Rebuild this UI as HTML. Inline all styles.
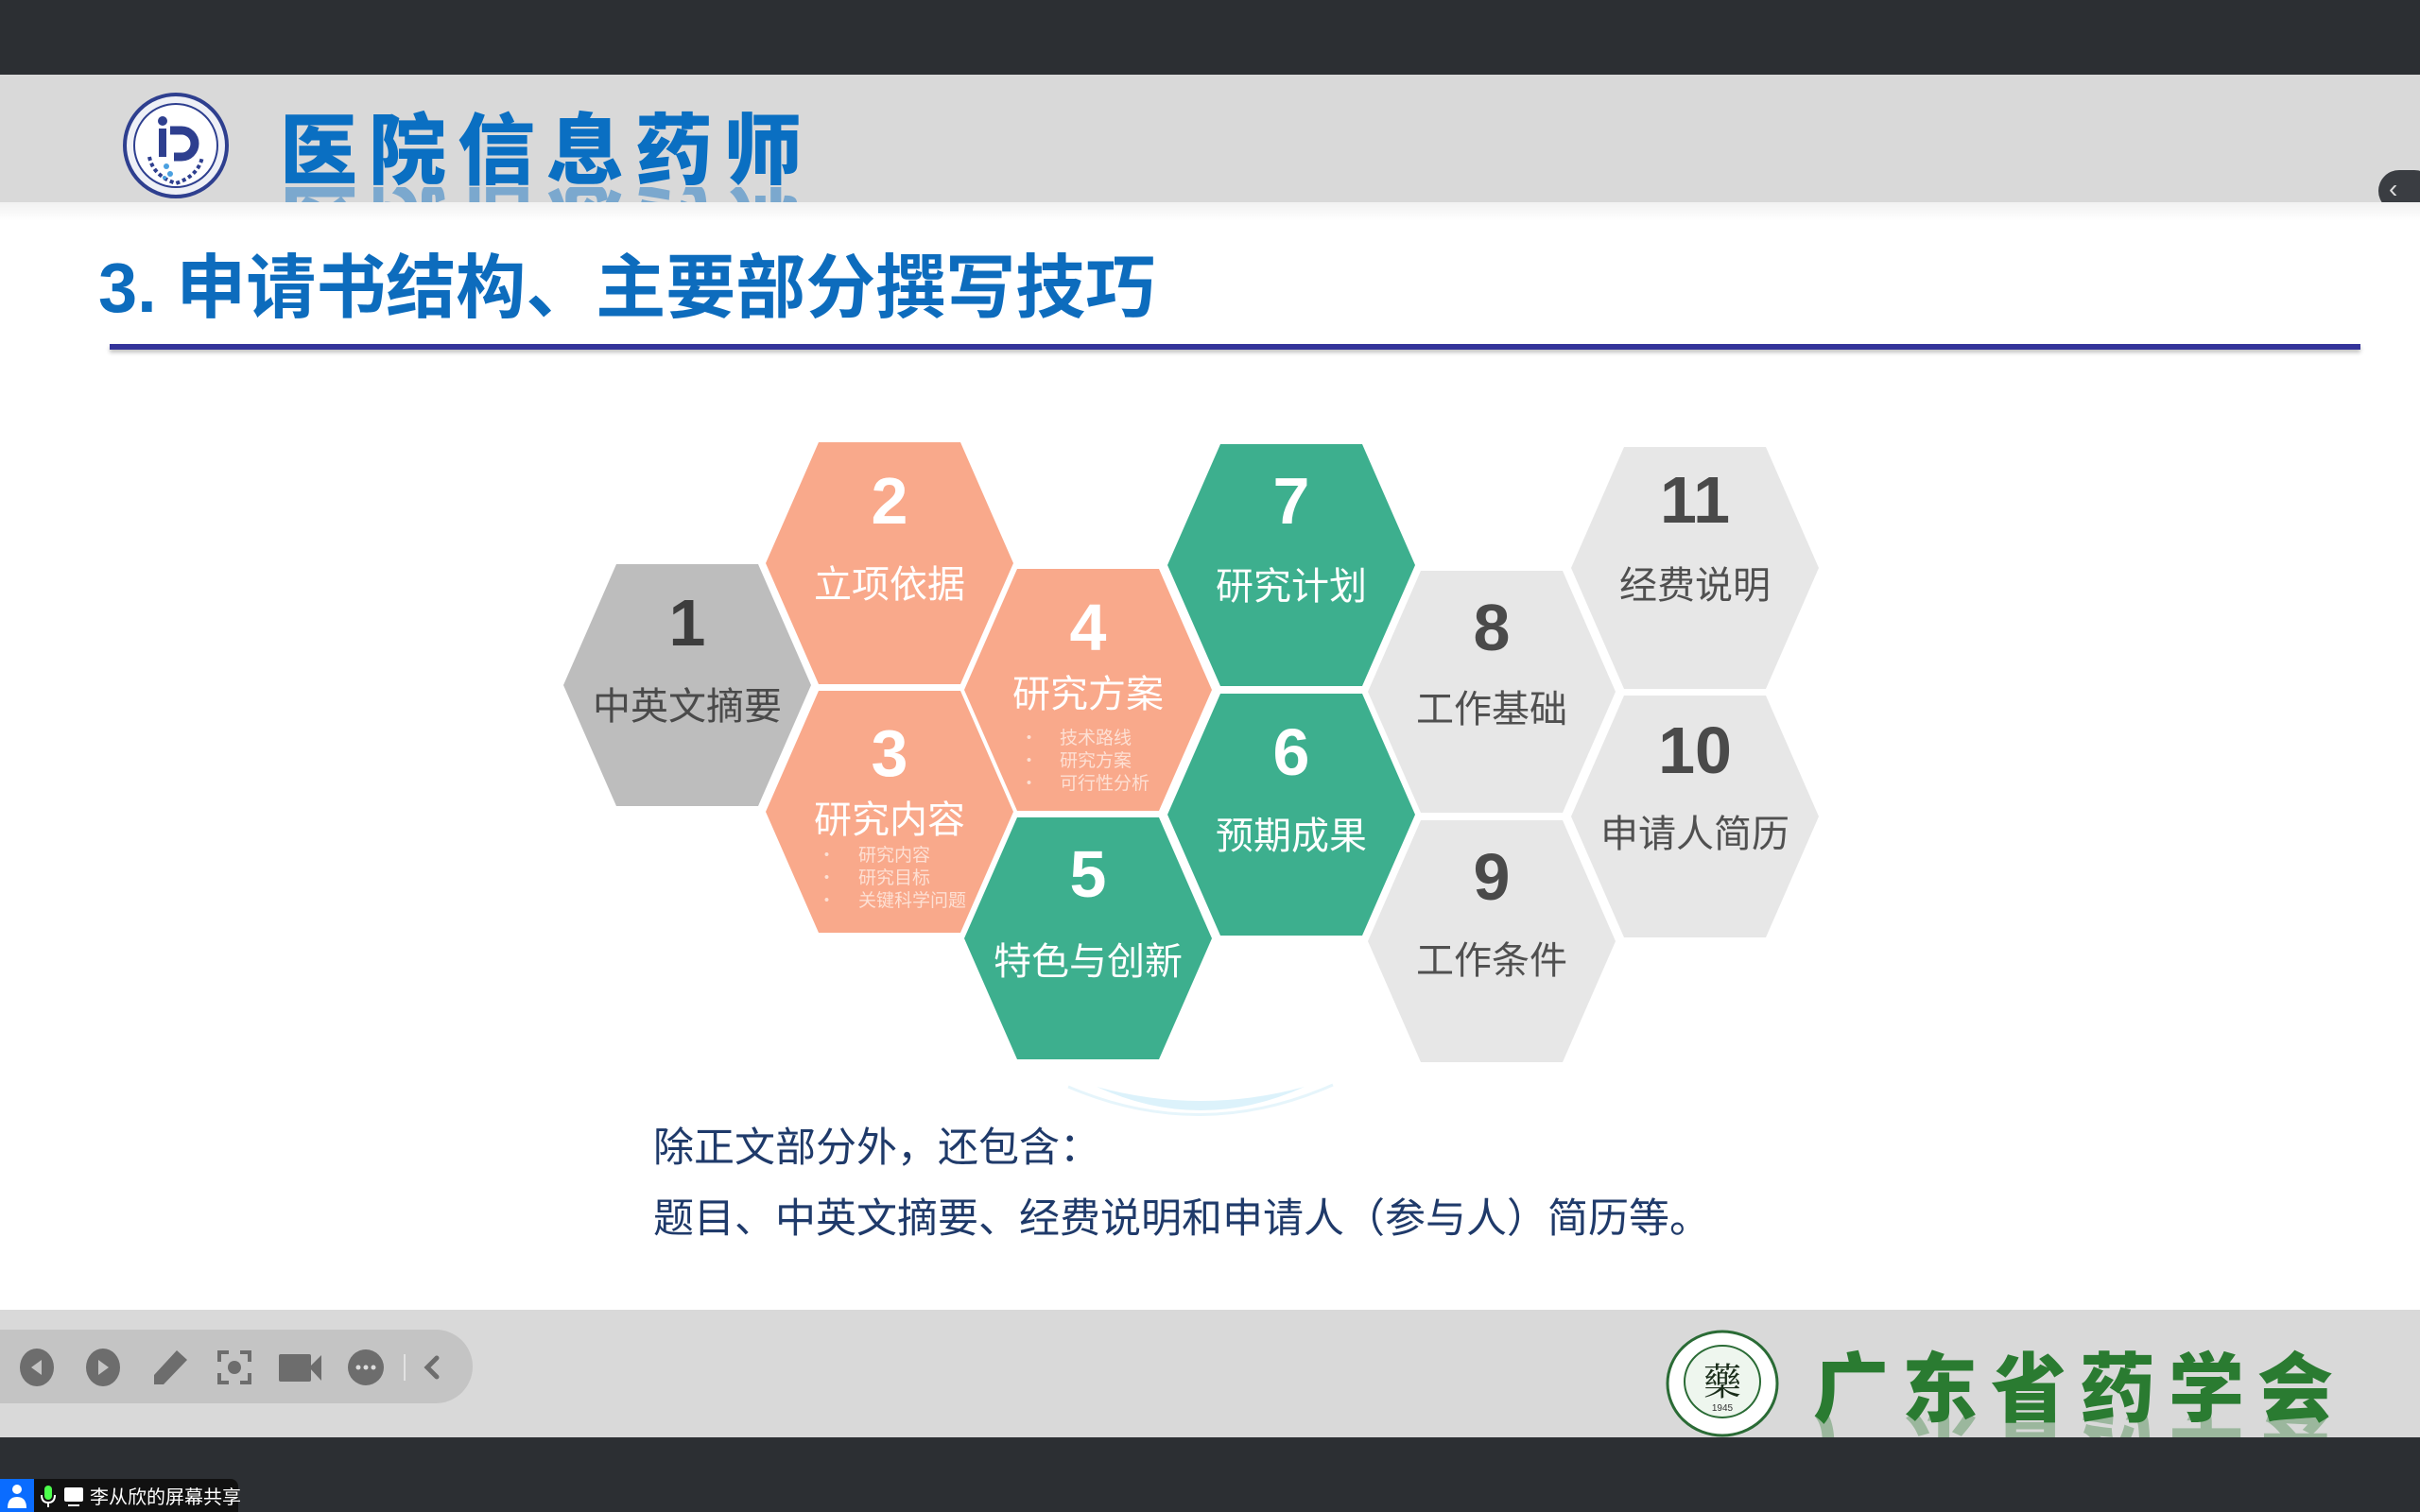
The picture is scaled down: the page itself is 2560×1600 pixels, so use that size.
<!DOCTYPE html>
<html><head><meta charset="utf-8">
<style>
html,body{margin:0;padding:0}
body{width:2560px;height:1600px;position:relative;overflow:hidden;background:#fff;font-family:"Liberation Sans","Noto Sans CJK SC",sans-serif}
.abs{position:absolute}
.cjk{font-family:"Noto Sans CJK SC","WenQuanYi Zen Hei",sans-serif}
</style></head>
<body>
<div class="abs" style="left:0;top:0;width:2560px;height:79px;background:#2c2f33"></div>
<div class="abs" style="left:0;top:79px;width:2560px;height:135px;background:#d9d9d9"></div>
<div class="abs" style="left:2516px;top:180px;width:60px;height:44px;background:#3a3d42;border-radius:22px"></div>
<div class="abs" style="left:2527px;top:184px;color:#ddd;font-size:28px">‹</div>

<svg class="abs" style="left:128px;top:96px" width="116" height="116" viewBox="0 0 116 116">
<circle cx="58" cy="58" r="54" fill="#eef0f6" stroke="#2e3f8f" stroke-width="4"/>
<circle cx="58" cy="58" r="44" fill="#fff" stroke="#2e3f8f" stroke-width="2"/>
<path d="M30 70 Q34 90 58 98 Q82 90 86 70" fill="none" stroke="#2e3f8f" stroke-width="4" stroke-dasharray="4 3"/>
<rect x="40" y="40" width="8" height="30" fill="#2e3f8f"/>
<circle cx="44" cy="32" r="5" fill="#2e3f8f"/>
<path d="M52 42 h12 a14 14 0 0 1 0 28 h-8" fill="none" stroke="#2e3f8f" stroke-width="9"/>
<circle cx="48" cy="80" r="3" fill="#4aa0e0"/><circle cx="52" cy="88" r="3" fill="#4aa0e0"/><circle cx="46" cy="92" r="2" fill="#4aa0e0"/>
</svg>
<div class="abs cjk" style="left:296px;top:103px;font-size:82px;font-weight:900;color:#0a6fc2;letter-spacing:12px;line-height:100px">医院信息药师</div>
<div class="abs" style="left:296px;top:198px;width:600px;height:18px;overflow:hidden;opacity:.45">
<div class="cjk" style="position:absolute;left:0;top:-10px;font-size:82px;font-weight:900;color:#0a6fc2;letter-spacing:12px;line-height:100px;transform:scaleY(-1);white-space:nowrap">医院信息药师</div>
</div>
<div class="abs" style="left:0;top:214px;width:2560px;height:20px;background:linear-gradient(#f1f1f1,#fff)"></div>

<div class="abs" style="left:104px;top:260px;font-size:74px;font-weight:bold;color:#0d6cbd;line-height:90px;font-family:'Liberation Sans','Noto Sans CJK SC',sans-serif;white-space:nowrap">3. 申请书结构、主要部分撰写技巧</div>
<div class="abs" style="left:116px;top:364px;width:2381px;height:6px;background:#33339a;box-shadow:0 3px 4px rgba(0,0,0,.25)"></div>

<svg class="abs" style="left:1120px;top:1140px" width="300" height="60"><path d="M40 10 Q150 60 260 10 Q150 40 40 10Z" fill="#dcf2fb"/><path d="M10 10 Q150 70 290 8" fill="none" stroke="#e6f5fb" stroke-width="3"/></svg>

<svg class="abs" style="left:0;top:0" width="2560" height="1400" viewBox="0 0 2560 1400">
<defs><polygon id="h" points="-131,0 -75,-128 75,-128 131,0 75,128 -75,128"/></defs>
<g font-family="Noto Sans CJK SC,sans-serif" text-anchor="middle">
<g transform="translate(727,725)"><use href="#h" fill="#bdbdbd"/>
<text y="-42" font-family="Liberation Sans" font-weight="bold" font-size="70" fill="#3d3d3d">1</text>
<text y="36" font-size="40" fill="#4a4a4a">中英文摘要</text></g>

<g transform="translate(941,596)"><use href="#h" fill="#f9a98b"/>
<text y="-42" font-family="Liberation Sans" font-weight="bold" font-size="70" fill="#fff">2</text>
<text y="36" font-size="40" fill="#fff">立项依据</text></g>

<g transform="translate(941,859)"><use href="#h" fill="#f9a98b"/>
<text y="-38" font-family="Liberation Sans" font-weight="bold" font-size="70" fill="#fff">3</text>
<text y="22" font-size="40" fill="#fff">研究内容</text>
<g font-size="19" fill="#fde0d4" text-anchor="start">
<text x="-76" y="52">·</text><text x="-33" y="52">研究内容</text>
<text x="-76" y="76">·</text><text x="-33" y="76">研究目标</text>
<text x="-76" y="100">·</text><text x="-33" y="100">关键科学问题</text></g></g>

<g transform="translate(1151,730)"><use href="#h" fill="#f9a98b"/>
<text y="-42" font-family="Liberation Sans" font-weight="bold" font-size="70" fill="#fff">4</text>
<text y="18" font-size="40" fill="#fff">研究方案</text>
<g font-size="19" fill="#fde0d4" text-anchor="start">
<text x="-72" y="57">·</text><text x="-30" y="57">技术路线</text>
<text x="-72" y="81">·</text><text x="-30" y="81">研究方案</text>
<text x="-72" y="105">·</text><text x="-30" y="105">可行性分析</text></g></g>

<g transform="translate(1151,993)"><use href="#h" fill="#3daf8e"/>
<text y="-44" font-family="Liberation Sans" font-weight="bold" font-size="70" fill="#fff">5</text>
<text y="38" font-size="40" fill="#fff">特色与创新</text></g>

<g transform="translate(1366,598)"><use href="#h" fill="#3daf8e"/>
<text y="-44" font-family="Liberation Sans" font-weight="bold" font-size="70" fill="#fff">7</text>
<text y="36" font-size="40" fill="#fff">研究计划</text></g>

<g transform="translate(1366,862)"><use href="#h" fill="#3daf8e"/>
<text y="-42" font-family="Liberation Sans" font-weight="bold" font-size="70" fill="#fff">6</text>
<text y="36" font-size="40" fill="#fff">预期成果</text></g>

<g transform="translate(1578,732)"><use href="#h" fill="#e7e7e7"/>
<text y="-44" font-family="Liberation Sans" font-weight="bold" font-size="70" fill="#4a4a4a">8</text>
<text y="32" font-size="40" fill="#505050">工作基础</text></g>

<g transform="translate(1578,996)"><use href="#h" fill="#e7e7e7"/>
<text y="-44" font-family="Liberation Sans" font-weight="bold" font-size="70" fill="#4a4a4a">9</text>
<text y="34" font-size="40" fill="#505050">工作条件</text></g>

<g transform="translate(1793,601)"><use href="#h" fill="#e7e7e7"/>
<text y="-48" font-family="Liberation Sans" font-weight="bold" font-size="70" fill="#4a4a4a">11</text>
<text y="32" font-size="40" fill="#505050">经费说明</text></g>

<g transform="translate(1793,864)"><use href="#h" fill="#e7e7e7"/>
<text y="-46" font-family="Liberation Sans" font-weight="bold" font-size="70" fill="#4a4a4a">10</text>
<text y="32" font-size="40" fill="#505050">申请人简历</text></g>
</g></svg>

<div class="abs cjk" style="left:691px;top:1181px;font-size:43px;color:#1f3a6a;line-height:60px">除正文部分外，还包含：</div>
<div class="abs cjk" style="left:691px;top:1256px;font-size:43px;color:#1f3a6a;line-height:60px">题目、中英文摘要、经费说明和申请人（参与人）简历等。</div>

<div class="abs" style="left:0;top:1386px;width:2560px;height:135px;background:#d9d9d9"></div>
<div class="abs" style="left:0;top:1407px;width:500px;height:78px;background:#c4c4c4;border-radius:0 39px 39px 0"></div>
<svg class="abs" style="left:0;top:1407px" width="500" height="78" viewBox="0 0 500 78">
<g fill="#6d6d6d">
<ellipse cx="39" cy="40" rx="18" ry="20"/><polygon points="33,40 44,32 44,48" fill="#c4c4c4"/>
<ellipse cx="109" cy="40" rx="18" ry="20"/><polygon points="115,40 104,32 104,48" fill="#c4c4c4"/>
<polygon points="163,58 163,48 187,22 198,32 173,58"/>
<circle cx="248" cy="40" r="7"/>
<path d="M232 34 v-10 h10 M254 24 h10 v10 M264 46 v10 h-10 M242 56 h-10 v-10" fill="none" stroke="#6d6d6d" stroke-width="4"/>
<rect x="295" y="26" width="34" height="29" rx="2"/><polygon points="327,40 340,27 340,54"/>
<circle cx="387" cy="40" r="19"/>
<circle cx="379" cy="40" r="2.5" fill="#ddd"/><circle cx="387" cy="40" r="2.5" fill="#ddd"/><circle cx="395" cy="40" r="2.5" fill="#ddd"/>
</g>
<line x1="428" y1="26" x2="428" y2="54" stroke="#e2e2e2" stroke-width="2"/>
<path d="M462 30 L452 40 L462 50" fill="none" stroke="#6d6d6d" stroke-width="5" stroke-linecap="round"/>
</svg>

<svg class="abs" style="left:1760px;top:1406px" width="124" height="116" viewBox="0 0 124 116">
<ellipse cx="62" cy="58" rx="58" ry="55" fill="#fff" stroke="#2a6b35" stroke-width="3"/>
<ellipse cx="62" cy="56" rx="40" ry="38" fill="#eef6ee" stroke="#2a6b35" stroke-width="2"/>
<text x="62" y="70" text-anchor="middle" font-family="Noto Serif CJK SC,serif" font-size="40" fill="#1a2d1a">藥</text>
<text x="62" y="87" text-anchor="middle" font-family="Liberation Sans" font-size="10" fill="#333">1945</text>
</svg>
<div class="abs cjk" style="left:1918px;top:1414px;font-size:80px;font-weight:900;color:#2a7b31;letter-spacing:14px;line-height:100px">广东省药学会</div>
<div class="abs" style="left:1918px;top:1495px;width:600px;height:26px;overflow:hidden;opacity:.35">
<div class="cjk" style="position:absolute;left:0;top:-12px;font-size:80px;font-weight:900;color:#2a7b31;letter-spacing:14px;line-height:100px;transform:scaleY(-1);white-space:nowrap">广东省药学会</div>
</div>

<div class="abs" style="left:0;top:1521px;width:2560px;height:79px;background:#2c2f33"></div>
<div class="abs" style="left:0;top:1565px;width:252px;height:35px;background:#111;border-radius:0 8px 0 0"></div>
<div class="abs" style="left:0;top:1565px;width:36px;height:35px;background:#0a6cff"></div>
<svg class="abs" style="left:0;top:1565px" width="90" height="35">
<circle cx="18" cy="11" r="5" fill="#fff"/><path d="M8 31 q0-12 10-12 q10 0 10 12z" fill="#fff"/>
<rect x="47" y="7" width="8" height="15" rx="4" fill="#4cff4c"/>
<path d="M44 17 q0 8 7 8 q7 0 7-8 M51 25 v5" fill="none" stroke="#fff" stroke-width="2"/>
<rect x="68" y="9" width="20" height="15" rx="2" fill="#fff"/><rect x="72" y="27" width="12" height="2" fill="#fff"/>
</svg>
<div class="abs cjk" style="left:95px;top:1568px;font-size:20px;color:#fff;line-height:30px">李从欣的屏幕共享</div>
</body></html>
